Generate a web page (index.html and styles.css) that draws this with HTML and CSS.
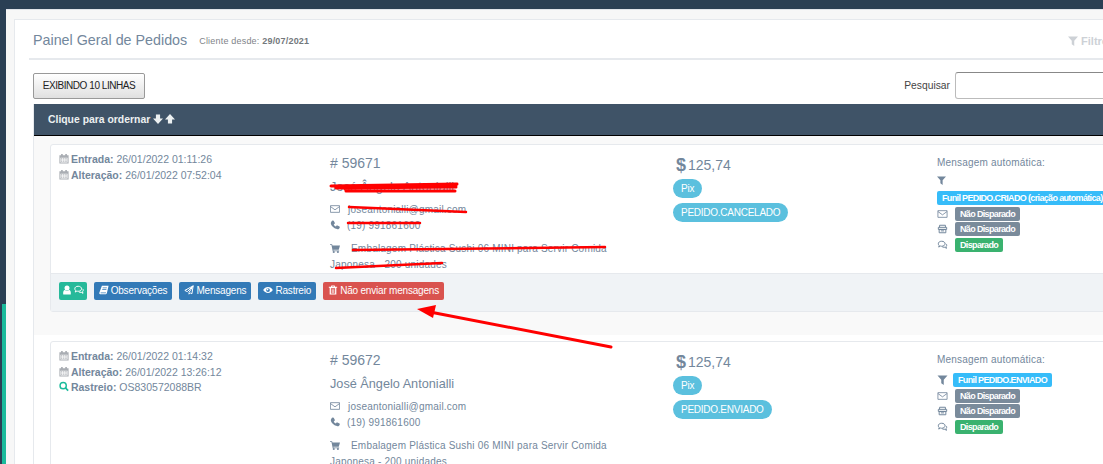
FILE: index.html
```html
<!DOCTYPE html>
<html lang="pt-BR">
<head>
<meta charset="utf-8">
<title>Painel Geral de Pedidos</title>
<link rel="stylesheet" href="styles.css">
</head>
<body>
<svg class="defs" width="0" height="0" aria-hidden="true">
  <symbol id="i-cal" viewBox="0 0 24 24"><path fill="currentColor" d="M1 4h4V1h4v3h6V1h4v3h4v20H1zM3.500 10v11.500h17V10zM5 11.500h3v3H5zm5 0h3v3h-3zm5 0h3.500v3H15zM5 16.500h3v3H5zm5 0h3v3h-3zm5 0h3.500v3H15z"/></symbol>
  <symbol id="i-search" viewBox="0 0 24 24"><circle cx="10" cy="10" r="7.500" fill="none" stroke="currentColor" stroke-width="3.400"/><path d="M15.500 15.500L22 22" stroke="currentColor" stroke-width="4"/></symbol>
  <symbol id="i-mail" viewBox="0 0 24 24"><path fill="none" stroke="currentColor" stroke-width="2" d="M1 4h22v16H1zM1 6l11 8 11-8"/></symbol>
  <symbol id="i-phone" viewBox="0 0 24 24"><path fill="currentColor" d="M6 1l3 .5 3 6.500-3 2.500c.8 2 2.500 3.800 5 5l2.500-3 6.500 3 .5 3c-1 2.500-3.500 4-5.500 3.500C9.500 21 3.500 14.500 2 8.500 1.700 6 3.500 2.500 6 1z"/></symbol>
  <symbol id="i-cart" viewBox="0 0 24 24"><path fill="currentColor" d="M0 3h5l1 3h18l-3 10H8l.4 2H22v2H6.500L3.500 5H0z"/><circle cx="9" cy="21.500" r="2.500" fill="currentColor"/><circle cx="19" cy="21.500" r="2.500" fill="currentColor"/></symbol>
  <symbol id="i-filter" viewBox="0 0 24 24"><path fill="currentColor" d="M0 1h24l-9 10.500V24l-6-4.500v-8z"/></symbol>
  <symbol id="i-fax" viewBox="0 0 24 24"><path fill="none" stroke="currentColor" stroke-width="2.400" d="M5 8V3h14v5M2 8h20v5H2zM4 13h16v8H4zM8 16.500h8"/></symbol>
  <symbol id="i-chat" viewBox="0 0 24 24"><path fill="none" stroke="currentColor" stroke-width="2.400" d="M10 3c5 0 8 2.500 8 6s-3 6-8 6c-1 0-2 0-3-.5L3 17l1-4C2.500 12 2 10.500 2 9c0-3.500 3-6 8-6z"/><path fill="none" stroke="currentColor" stroke-width="2.400" d="M20 9c1.500 1 2.500 2.500 2 4.500-.3 1-1 2-1.500 2.500l1 4-4-2.500c-2 .5-4.500 0-6-1"/></symbol>
  <symbol id="i-user" viewBox="0 0 24 24"><circle cx="12" cy="7" r="6" fill="currentColor"/><path fill="currentColor" d="M3 23c-1-7 1-11 4-11 1 1 3 2 5 2s4-1 5-2c3 0 5 4 4 11z"/></symbol>
  <symbol id="i-book" viewBox="0 0 24 24"><path fill="currentColor" d="M7 2h16l-4 17c-.5 2-2 3-4 3H3c-2 0-3-2-2-4zm2 4l-.5 2h10l.5-2zm-1 4l-.5 2h10l.5-2zM4 18c-.5 1 0 2 1 2h10c1 0 1.500-.5 2-2z"/></symbol>
  <symbol id="i-plane" viewBox="0 0 24 24"><path fill="none" stroke="currentColor" stroke-width="2.400" stroke-linejoin="round" d="M22 2L2 13l6 3 14-14-10 16v4l3-3 4 2z"/></symbol>
  <symbol id="i-eye" viewBox="0 0 24 24"><path fill="currentColor" d="M12 5c5 0 9 3 11.500 7C21 16 17 19 12 19S3 16 .5 12C3 8 7 5 12 5zm0 2.500a4.500 4.500 0 1 0 0 9 4.500 4.500 0 0 0 0-9zm-1 1.500a2 2 0 1 1-2 2 2 2 0 0 1 2-2z"/></symbol>
  <symbol id="i-trash" viewBox="0 0 24 24"><path fill="currentColor" d="M8 1h8l1 3h5v2.500h-2V23H4V6.500H2V4h5zm2.500 2l-.5 1h4l-.5-1zM7 8v12.500h10V8zM9 10h2v9H9zm4 0h2v9h-2z"/></symbol>
  <symbol id="i-down" viewBox="0 0 24 24"><path fill="currentColor" d="M7 1h10v10h7L12 24 0 11h7z"/></symbol>
  <symbol id="i-up" viewBox="0 0 24 24"><path fill="currentColor" d="M12 0l12 13h-7v10H7V13H0z"/></symbol>
</svg>

<div class="shell">
  <aside class="rail"><div class="rail-accent"></div></aside>
  <main class="content">
    <section class="panel">
      <header class="panel-title">
        <h2 class="title">Painel Geral de Pedidos</h2>
        <span class="since">Cliente desde: <b>29/07/2021</b></span>
        <a class="filters"><svg class="ico"><use href="#i-filter"/></svg> Filtros</a>
      </header>

      <div class="toolbar">
        <button class="lines-btn" type="button">EXIBINDO 10 LINHAS</button>
        <label class="search">Pesquisar <input class="search-input" type="text"></label>
      </div>

      <div class="table">
        <div class="table-head">Clique para ordernar <svg class="ico sort"><use href="#i-down"/></svg> <svg class="ico sort"><use href="#i-up"/></svg></div>

        <div class="row shaded">
          <article class="card">
            <div class="card-body">
              <div class="col dates">
                <p><svg class="ico cal"><use href="#i-cal"/></svg> <b>Entrada:</b> 26/01/2022 01:11:26</p>
                <p><svg class="ico cal"><use href="#i-cal"/></svg> <b>Alteração:</b> 26/01/2022 07:52:04</p>
              </div>
              <div class="col customer">
                <div class="order-no"># 59671</div>
                <div class="name">José Ângelo Antonialli</div>
                <div class="contact"><svg class="ico mail"><use href="#i-mail"/></svg>joseantonialli@gmail.com</div>
                <div class="contact"><svg class="ico tel"><use href="#i-phone"/></svg>(19) 991861600</div>
                <div class="product"><svg class="ico cart"><use href="#i-cart"/></svg>Embalagem Plástica Sushi 06 MINI para Servir Comida Japonesa - 200 unidades</div>
              </div>
              <div class="col pay">
                <div class="amount"><b>$</b>125,74</div>
                <span class="pill">Pix</span>
                <span class="pill">PEDIDO.CANCELADO</span>
              </div>
              <div class="col auto">
                <div class="auto-title">Mensagem automática:</div>
                <div class="auto-line stack"><svg class="ico flt"><use href="#i-filter"/></svg></div>
                <div class="auto-line"><span class="badge funil">Funil PEDIDO.CRIADO (criação automática)</span></div>
                <div class="auto-line"><svg class="ico st"><use href="#i-mail"/></svg><span class="badge off">Não Disparado</span></div>
                <div class="auto-line"><svg class="ico st"><use href="#i-fax"/></svg><span class="badge off">Não Disparado</span></div>
                <div class="auto-line"><svg class="ico st"><use href="#i-chat"/></svg><span class="badge on">Disparado</span></div>
              </div>
            </div>
            <footer class="card-actions">
              <a class="btn green"><svg class="ico"><use href="#i-user"/></svg> <svg class="ico"><use href="#i-chat"/></svg></a>
              <a class="btn blue"><svg class="ico"><use href="#i-book"/></svg> Observações</a>
              <a class="btn blue"><svg class="ico"><use href="#i-plane"/></svg> Mensagens</a>
              <a class="btn blue"><svg class="ico"><use href="#i-eye"/></svg> Rastreio</a>
              <a class="btn red"><svg class="ico"><use href="#i-trash"/></svg> Não enviar mensagens</a>
            </footer>
          </article>
        </div>

        <div class="row">
          <article class="card">
            <div class="card-body">
              <div class="col dates">
                <p><svg class="ico cal"><use href="#i-cal"/></svg> <b>Entrada:</b> 26/01/2022 01:14:32</p>
                <p><svg class="ico cal"><use href="#i-cal"/></svg> <b>Alteração:</b> 26/01/2022 13:26:12</p>
                <p><svg class="ico cal find"><use href="#i-search"/></svg> <b>Rastreio:</b> OS830572088BR</p>
              </div>
              <div class="col customer">
                <div class="order-no"># 59672</div>
                <div class="name">José Ângelo Antonialli</div>
                <div class="contact"><svg class="ico mail"><use href="#i-mail"/></svg>joseantonialli@gmail.com</div>
                <div class="contact"><svg class="ico tel"><use href="#i-phone"/></svg>(19) 991861600</div>
                <div class="product"><svg class="ico cart"><use href="#i-cart"/></svg>Embalagem Plástica Sushi 06 MINI para Servir Comida Japonesa - 200 unidades</div>
              </div>
              <div class="col pay">
                <div class="amount"><b>$</b>125,74</div>
                <span class="pill">Pix</span>
                <span class="pill">PEDIDO.ENVIADO</span>
              </div>
              <div class="col auto">
                <div class="auto-title">Mensagem automática:</div>
                <div class="auto-line first"><svg class="ico st"><use href="#i-filter"/></svg><span class="badge funil lead">Funil PEDIDO.ENVIADO</span></div>
                <div class="auto-line"><svg class="ico st"><use href="#i-mail"/></svg><span class="badge off">Não Disparado</span></div>
                <div class="auto-line"><svg class="ico st"><use href="#i-fax"/></svg><span class="badge off">Não Disparado</span></div>
                <div class="auto-line"><svg class="ico st"><use href="#i-chat"/></svg><span class="badge on">Disparado</span></div>
              </div>
            </div>
          </article>
        </div>
      </div>
    </section>
  </main>
</div>

<svg class="marks" width="1103" height="464" viewBox="0 0 1103 464" aria-hidden="true">
  <g fill="none" stroke="#f00" stroke-linecap="round">
    <path stroke-width="3" d="M331 186L457 184M336 188L456 187M346 191L455 191M345 189L456 185"/>
    <path stroke-width="2.500" d="M349 207L466 212"/>
    <path stroke-width="2.500" d="M348 223L420 223"/>
    <path stroke-width="2.500" d="M353 250L605 247"/>
    <path stroke-width="2.500" d="M336 268L442 263"/>
    <path stroke-width="3" d="M430 312L611 347"/>
  </g>
  <path fill="#f00" d="M417 309L436 305L433 318z"/>
</svg>
</body>
</html>
```

FILE: styles.css
```css
* { box-sizing: border-box; }
html, body { margin: 0; height: 464px; overflow: hidden; }
body {
  background: #2a3f54;
  font-family: "Liberation Sans", Arial, sans-serif;
  font-size: 10.5px;
  color: #73879c;
  position: relative;
}
.defs { position: absolute; }
.ico { width: 10px; height: 10px; display: inline-block; vertical-align: -1px; }

.shell { display: flex; height: 464px; padding-top: 9px; }
.rail { width: 6px; flex: none; position: relative; margin-top: -9px; }
.rail-accent { position: absolute; left: 2px; right: 0; top: 304px; bottom: 0; background: #1abb9c; }

.content {
  flex: none;
  width: 1200px;
  background: #f7f7f7;
  border-top: 1px solid #dfe3ea;
  padding: 9px 0 0 8px;
}
.panel {
  background: #fff;
  border: 1px solid #e6e9ed;
  padding: 0 14px;
  width: 1130px;
  height: 600px;
}
.panel-title {
  display: flex;
  align-items: flex-start;
  height: 40px;
  padding: 12px 0 0 4px;
  border-bottom: 2px solid #e6e9ed;
}
.title { margin: 0; font-size: 14.300px; line-height: 16px; font-weight: 400; color: #73879c; }
.since { margin: 3.500px 0 0 12px; font-size: 9px; line-height: 11px; letter-spacing: .2px; color: #7f8489; }
.since b { color: #73787c; }
.filters { position: absolute; left: 1068px; top: 35px; font-weight: 700; font-size: 11px; color: #cdd1d6; white-space: nowrap; }

.toolbar {
  display: flex;
  align-items: center;
  justify-content: space-between;
  height: 27px;
  margin-top: 12px;
  padding-left: 4px;
}
.lines-btn {
  width: 112px;
  height: 26px;
  padding: 0;
  font: 10px "Liberation Sans", Arial, sans-serif;
  letter-spacing: -.45px;
  color: #222;
  background: linear-gradient(#fff, #e0e0e0);
  border: 1px solid #999;
  border-radius: 2px;
}
.search { display: flex; align-items: center; gap: 5px; color: #444; font-size: 10.300px; }
.search-input { width: 174px; height: 27px; border: 1px solid #bbb; border-top-color: #888; border-radius: 3px; background: #fff; }

.table { margin: 5px 0 0 4px; border-left: 1px solid #e6e9ed; }
.table-head {
  height: 32px;
  padding: 10px 0 0 14px;
  background: #3f5367;
  border-bottom: 1px solid #000;
  color: #ecf0f1;
  font-weight: 700;
  font-size: 10.400px;
}
.sort { margin-right: -1px; }
.row { padding: 6px 0 0 16px; background: #fff; }
.row.shaded { background: #f9f9f9; padding: 8px 0 23px 16px; }
.card { background: #fff; border: 1px solid #e6e9ed; border-radius: 3px; width: 1060px; }
.card-body {
  display: grid;
  grid-template-columns: 271px 345px 262px 1fr;
  height: 128px;
  padding: 8px 0 0 8px;
}
.col p { margin: 0; line-height: 15.500px; }
.dates { margin-top: -1px; }
.dates .ico { width: 10px; height: 11px; margin-right: -1px; }
.cal { color: #a9adb3; }
.find { color: #1abb9c; }

.order-no { font-size: 14px; line-height: 20px; }
.name { font-size: 12.700px; line-height: 18px; margin-top: 5px; }
.contact { line-height: 15.500px; font-size: 10px; letter-spacing: .2px; }
.name + .contact { margin-top: 6px; }
.contact .ico { margin-right: 8px; }
.contact .tel { margin-right: 7px; }
.product { width: 300px; margin-top: 8px; line-height: 15.500px; font-size: 10px; letter-spacing: .2px; }
.product .ico { margin-right: 11px; }

.pay { display: flex; flex-direction: column; align-items: flex-start; gap: 4.500px; margin-left: -2px; }
.amount { font-size: 14px; line-height: 20px; margin: 1.500px 0 0 3px; }
.amount b { font-size: 18px; margin-right: 2px; vertical-align: -1px; }
.pill {
  background: #5bc0de;
  color: #fff;
  border-radius: 10px;
  font-size: 10px;
  letter-spacing: -.25px;
  line-height: 19px;
  padding: 0 8px;
}

.auto-title { line-height: 16px; margin-top: 2px; font-size: 10px; letter-spacing: .2px; }
.auto-line { display: flex; align-items: center; height: 15.500px; }
.auto-line.stack { margin-top: 3px; height: 16.500px; align-items: flex-start; padding-top: 2px; }
.auto-line.first { margin-top: 4.500px; }
.flt { width: 9px; height: 9px; }
.st { width: 11px; height: 10px; margin-right: 7px; flex: none; }
.badge {
  color: #fff;
  font-weight: 700;
  font-size: 9px;
  letter-spacing: -.65px;
  line-height: 14px;
  padding: 0 5px;
  border-radius: 2px;
  white-space: nowrap;
}
.badge.lead { margin-left: -2px; }
.funil { background: #36bcf9; }
.off { background: #7a8b9b; }
.on { background: #3ab26f; }

.card-actions {
  display: flex;
  align-items: center;
  gap: 7px;
  height: 38px;
  padding: 0 0 4px 8px;
  background: #f0f3f6;
  border-top: 1px solid #e6e9ed;
}
.btn {
  color: #fff;
  font-size: 10px;
  letter-spacing: -.2px;
  line-height: 18px;
  height: 18px;
  padding: 0 5px;
  border-radius: 2px;
  white-space: nowrap;
}
.btn .ico { margin-right: -.5px; }
.green { background: #26b99a; padding: 0 3px; }
.blue { background: #337ab7; }
.red { background: #d9534f; }

.marks { position: absolute; left: 0; top: 0; pointer-events: none; }
```
